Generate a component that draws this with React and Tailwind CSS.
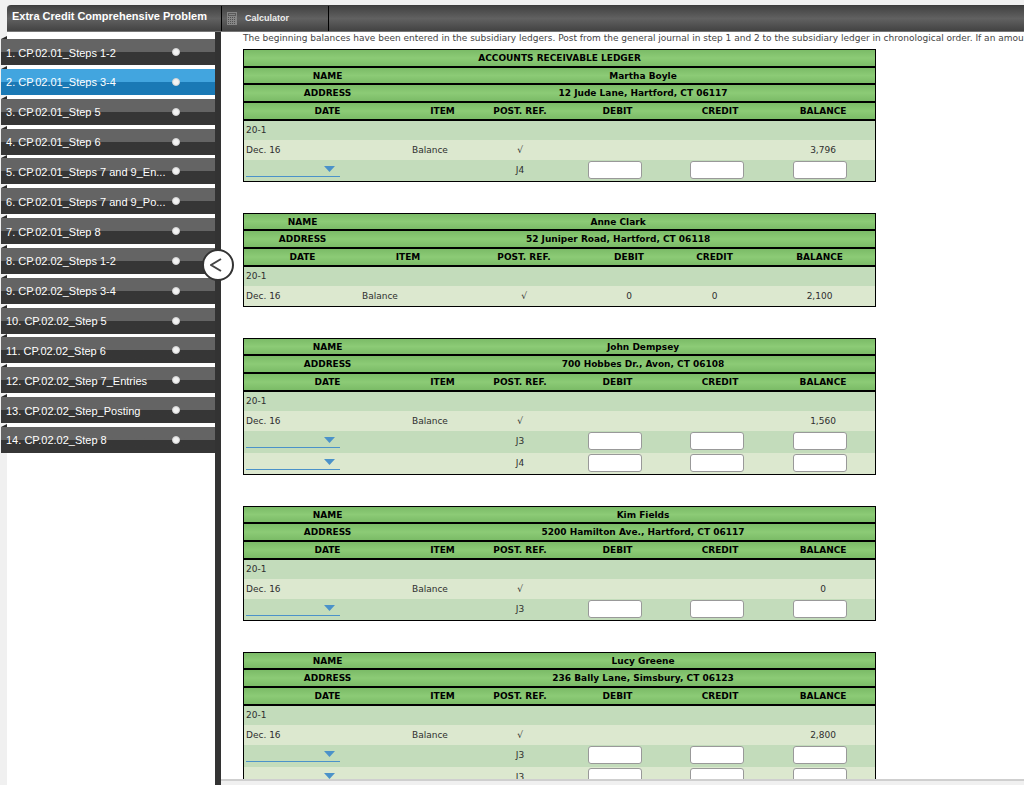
import React, { useState } from 'react';
import clsx from 'clsx';

const STEPS = [
    'CP.02.01_Steps 1-2',
    'CP.02.01_Steps 3-4',
    'CP.02.01_Step 5',
    'CP.02.01_Step 6',
    'CP.02.01_Steps 7 and 9_En...',
    'CP.02.01_Steps 7 and 9_Po...',
    'CP.02.01_Step 8',
    'CP.02.02_Steps 1-2',
    'CP.02.02_Steps 3-4',
    'CP.02.02_Step 5',
    'CP.02.02_Step 6',
    'CP.02.02_Step 7_Entries',
    'CP.02.02_Step_Posting',
    'CP.02.02_Step 8',
];

const WIDE_DATE = ['w-[167px]', 'w-[63px]', 'w-[92px]', 'w-[103px]', 'w-[102px]', 'w-[104px]'];
const WIDE_REF = ['w-[117px]', 'w-[94px]', 'w-[138px]', 'w-[72px]', 'w-[99px]', 'w-[111px]'];

const LEDGERS = [
    { title: 'ACCOUNTS RECEIVABLE LEDGER', name: 'Martha Boyle', address: '12 Jude Lane, Hartford, CT 06117', balance: '3,796', posts: ['J4'], cols: WIDE_DATE },
    { name: 'Anne Clark', address: '52 Juniper Road, Hartford, CT 06118', debit: '0', credit: '0', balance: '2,100', posts: [], cols: WIDE_REF },
    { name: 'John Dempsey', address: '700 Hobbes Dr., Avon, CT 06108', balance: '1,560', posts: ['J3', 'J4'], cols: WIDE_DATE },
    { name: 'Kim Fields', address: '5200 Hamilton Ave., Hartford, CT 06117', balance: '0', posts: ['J3'], cols: WIDE_DATE },
    { name: 'Lucy Greene', address: '236 Bally Lane, Simsbury, CT 06123', balance: '2,800', posts: ['J3', 'J3'], cols: WIDE_DATE },
];

const HEADINGS = ['DATE', 'ITEM', 'POST. REF.', 'DEBIT', 'CREDIT', 'BALANCE'];
const HEAD_ROW = 'border-b-2 border-black bg-linear-to-b from-[#7bbb67] via-[#8ccb76] to-[#7bbb67]';

function CalculatorIcon() {
    return (
        <svg width="10" height="13" viewBox="0 0 10 13" shapeRendering="crispEdges" aria-hidden="true">
            <rect x="0" y="0" width="10" height="13" fill="#868686" />
            <rect x="1" y="1" width="8" height="3" fill="#5a5a5a" />
            <rect x="2" y="2" width="6" height="1" fill="#868686" />
            {[5, 7, 9, 11].map((y) => [1, 3, 5, 7].map((x) => (
                <rect key={`${x}-${y}`} x={x} y={y} width="1" height="1" fill="#505050" />
            )))}
        </svg>
    );
}

function TopBar() {
    return (
        <header className="ml-[7px] h-[27px] shrink-0 flex rounded-tl-sm border-t border-b border-t-[#3c3c3c] border-b-[#777] bg-linear-to-b from-[#424242] via-[#616161] to-[#434343] text-white font-bold">
            <h1 className="w-[214px] shrink-0 pl-[5px] pt-[2px] text-[11px] leading-4 whitespace-nowrap">
                Extra Credit Comprehensive Problem
            </h1>
            <button type="button" className="w-[108px] flex items-center gap-2 pl-[5px] border-x border-black text-[9px] text-[#eee]">
                <CalculatorIcon />
                Calculator
            </button>
        </header>
    );
}

function StepItem({ number, label, active, onSelect }) {
    return (
        <li className="relative">
            <svg className="absolute -top-[3px] left-0" width="6" height="3" viewBox="0 0 6 3" aria-hidden="true">
                <path d="M0 3 L6 0 V3 Z" fill="#2b2b2b" />
            </svg>
            <button
                type="button"
                onClick={onSelect}
                className={clsx(
                    'w-full h-[26px] flex items-center pl-[5px] pr-[35px] text-left text-[11px] leading-4 text-white bg-linear-to-b from-50% to-50%',
                    active ? 'from-[#42a5df] to-[#1a79b5]' : 'from-[#646464] to-[#363636]'
                )}
            >
                <span className="flex-1 pt-px whitespace-nowrap">{number}. {label}</span>
                <span className="size-2 rounded-full border border-[#d2d2d2] bg-[#f2f2f2]" />
            </button>
        </li>
    );
}

function DateSelect({ label }) {
    return (
        <div className="relative w-[94px]">
            <select aria-label={label} defaultValue="" className="block w-full h-4 appearance-none bg-transparent border-b border-[#4b92c9] text-[9px] outline-none">
                <option value=""></option>
                <option>Dec. 11</option>
                <option>Dec. 16</option>
                <option>Dec. 18</option>
            </select>
            <svg className="absolute right-[5px] top-[5px] pointer-events-none" width="11" height="6" viewBox="0 0 11 6" aria-hidden="true">
                <path d="M0 0 H11 L5.5 6 Z" fill="#4b92c9" />
            </svg>
        </div>
    );
}

function Ledger({ title, name, address, debit, credit, balance, posts, cols }) {
    return (
        <table className="w-[633px] table-fixed border-separate border-spacing-0 border border-black text-[9px] leading-3 text-center text-[#2e2e2e]">
            <colgroup>
                {cols.map((width, i) => <col key={i} className={width} />)}
            </colgroup>
            <thead className="text-black">
                {title && (
                    <tr className="h-[18px]">
                        <th colSpan={6} className={HEAD_ROW}>{title}</th>
                    </tr>
                )}
                <tr className="h-[17px]">
                    <th className={HEAD_ROW}>NAME</th>
                    <th colSpan={5} className={HEAD_ROW}>{name}</th>
                </tr>
                <tr className="h-[18px]">
                    <th className={HEAD_ROW}>ADDRESS</th>
                    <th colSpan={5} className={HEAD_ROW}>{address}</th>
                </tr>
                <tr className="h-[18px]">
                    {HEADINGS.map((heading) => <th key={heading} className={HEAD_ROW}>{heading}</th>)}
                </tr>
            </thead>
            <tbody>
                <tr className="h-[19px] bg-[#c3dcbb]">
                    <td colSpan={6} className="pl-0.5 pb-0.5 text-left">20-1</td>
                </tr>
                <tr className="h-5 bg-[#dce8cf]">
                    <td className="pl-0.5 text-left">Dec. 16</td>
                    <td className="pl-px text-left">Balance</td>
                    <td>√</td>
                    <td>{debit}</td>
                    <td>{credit}</td>
                    <td>{balance}</td>
                </tr>
                {posts.map((ref, i) => (
                    <tr
                        key={i}
                        className={clsx(
                            i % 2 === 0 ? 'bg-[#c3dcbb]' : 'bg-[#dce8cf]',
                            i === posts.length - 1 ? 'h-[21px]' : 'h-[22px]'
                        )}
                    >
                        <td className="pl-0.5 pt-px align-top"><DateSelect label={`${name} date ${i + 1}`} /></td>
                        <td></td>
                        <td className="pt-1 align-top">{ref}</td>
                        {['debit', 'credit', 'balance'].map((field) => (
                            <td key={field} className="pt-px pr-1.5 align-top">
                                <input
                                    type="text"
                                    aria-label={`${name} ${field} ${i + 1}`}
                                    className="block mx-auto w-[54px] h-[18px] px-1 rounded-[3px] border border-[#999] bg-white text-right text-[9px]"
                                />
                            </td>
                        ))}
                    </tr>
                ))}
            </tbody>
        </table>
    );
}

export default function App() {
    const [activeStep, setActiveStep] = useState(1);
    const [collapsed, setCollapsed] = useState(false);

    return (
        <div className="h-screen flex flex-col overflow-hidden pt-[5px] bg-[#f0f0f0] font-['Liberation_Sans',Arial,sans-serif]">
            <TopBar />
            <div className="flex-1 min-h-0 flex">
                {!collapsed && (
                    <nav className="w-[215px] shrink-0 pl-px pt-[7px] bg-linear-to-r from-[#f0f0f0] from-[7px] to-white to-[7px]">
                        <ul className="h-[414px] flex flex-col justify-between">
                            {STEPS.map((label, i) => (
                                <StepItem
                                    key={label}
                                    number={i + 1}
                                    label={label}
                                    active={i === activeStep}
                                    onSelect={() => setActiveStep(i)}
                                />
                            ))}
                        </ul>
                    </nav>
                )}
                <div className="relative w-[6px] shrink-0 bg-[#333]">
                    <button
                        type="button"
                        aria-label="Toggle navigation"
                        onClick={() => setCollapsed(!collapsed)}
                        className="absolute z-10 top-[217px] left-1/2 -translate-x-1/2 size-8 rounded-full border-2 border-[#333] bg-white flex items-center justify-center"
                    >
                        <svg className="mr-1" width="12" height="14" viewBox="0 0 12 14" fill="none" stroke="#444" strokeWidth="2" aria-hidden="true">
                            <path d="M11 1 L1 7 L11 13" />
                        </svg>
                    </button>
                </div>
                <div className="flex-1 min-w-0 flex flex-col pb-1">
                    <main className="flex-1 min-h-0 overflow-hidden pl-[22px] bg-white border-b-2 border-[#cfcfcf] font-['DejaVu_Sans',Verdana,sans-serif]">
                        <p className="mb-[5px] text-[9px] leading-3 whitespace-nowrap text-[#444]">
                            The beginning balances have been entered in the subsidiary ledgers. Post from the general journal in step 1 and 2 to the subsidiary ledger in chronological order. If an amount
                        </p>
                        <div className="flex flex-col gap-[31px]">
                            {LEDGERS.map((ledger) => <Ledger key={ledger.name} {...ledger} />)}
                        </div>
                    </main>
                </div>
            </div>
        </div>
    );
}
